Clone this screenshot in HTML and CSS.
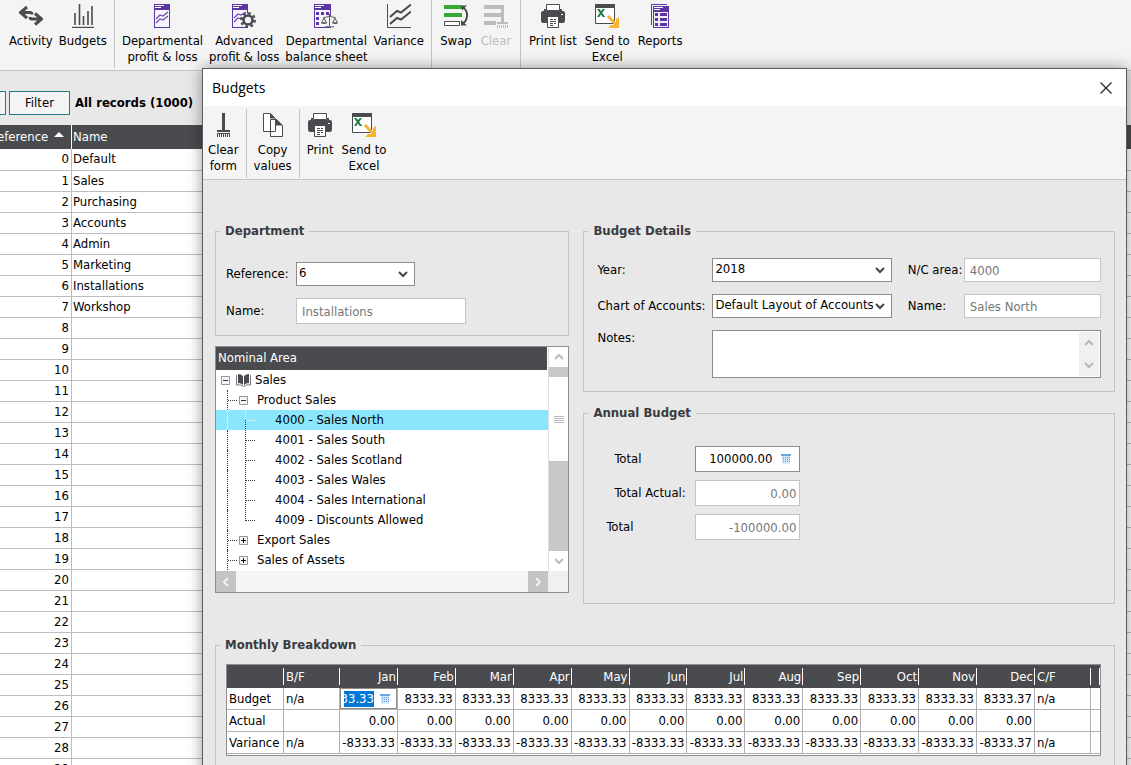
FILE: index.html
```html
<!DOCTYPE html>
<html lang="en">
<head>
  <meta charset="UTF-8" />
  <meta name="viewport" content="width=device-width, initial-scale=1.0"/>
  <title>Budgets</title>
  <link rel="stylesheet" href="styles.css">
</head>
<body>

  <!-- shared icons -->
  <svg class="sprite" aria-hidden="true">
    <symbol id="i-activity" viewBox="0 0 24 24">
      <path d="M8 3 1.500 8.500 8 14M2 8.500h9q2 0 2 2M16 9.500l6.500 5.500-6.500 5.500M22 15h-9q-2 0-2-2" fill="none" stroke="#4a4b4f" stroke-width="3"/>
    </symbol>
    <symbol id="i-budgets" viewBox="0 0 24 24">
      <path d="M4 9v12M8.500 0v21M12.500 12v9M17 7v14M21 2v19" stroke="#4a4b4f" stroke-width="1.600"/>
      <path d="M1 23.400h22" stroke="#4a4b4f" stroke-width="1.200"/>
    </symbol>
    <symbol id="i-doc" viewBox="0 0 24 24">
      <rect x="4.500" y=".5" width="15" height="23" fill="#f7f5fb" stroke="#5e35a5"/>
      <path d="M4 0h16v6H4z" fill="#5e35a5"/>
      <path d="M5 1.500h9M5 3.500h6" stroke="#fff"/>
      <path d="M6 15l4-4 3 1 5-4M6 19l4-4 3 1 5-4" fill="none" stroke="#6d4ab0" stroke-width="1.200"/>
    </symbol>
    <symbol id="i-doc-gear" viewBox="0 0 24 24">
      <rect x=".5" y=".5" width="15" height="23" fill="#f7f5fb" stroke="#5e35a5"/>
      <path d="M0 0h16v6H0z" fill="#5e35a5"/>
      <path d="M1 1.500h9M1 3.500h6" stroke="#fff"/>
      <path d="M2 14l4-4 3 1 5-3M2 18l4-4 3 1" fill="none" stroke="#6d4ab0" stroke-width="1.200"/>
      <circle cx="16" cy="16" r="6.500" fill="#f4f4f4"/>
      <circle cx="16" cy="16" r="4.500" fill="none" stroke="#4a4b4f" stroke-width="2.600"/>
      <circle cx="16" cy="16" r="6.700" fill="none" stroke="#4a4b4f" stroke-width="2.600" stroke-dasharray="2.630 2.630"/>
    </symbol>
    <symbol id="i-doc-scales" viewBox="0 0 24 24">
      <rect x=".5" y=".5" width="16" height="23" fill="#f7f5fb" stroke="#5e35a5"/>
      <path d="M0 0h17v6H0z" fill="#5e35a5"/>
      <path d="M1 1.500h9M1 3.500h6" stroke="#fff"/>
      <path d="M2 8h3v3H2zM7 8h3v3H7zM12 8h3v3h-3zM2 13h3v3H2zM2 18h3v3H2z" fill="#5e35a5"/>
      <path d="M8 12h15v8h-5v3h-6v-3H8z" fill="#f4f4f4"/>
      <path d="M15.500 10v12M11 22.800h9M9.500 13.500q3 0 6-1.500 3 1.500 6 1.500M10 14l-2.500 5h5zM21 14l-2.500 5h5z" fill="none" stroke="#5a5b60"/>
      <path d="M7 18.500h6q-3 3-6 0M18 18.500h6q-3 3-6 0" fill="#5a5b60"/>
    </symbol>
    <symbol id="i-variance" viewBox="0 0 24 24">
      <path d="M.5 0v23.500H24" fill="none" stroke="#4a4b4f"/>
      <path d="M3 13l7-6 4 1.500 10-8M3 20l7-6 4 1.500 10-8" fill="none" stroke="#4a4b4f" stroke-width="2"/>
    </symbol>
    <symbol id="i-swap" viewBox="0 0 24 24">
      <path d="M0 1h18v4H0zM0 9h18v4H0z" fill="#35a935"/>
      <path d="M.5 17.500h15v4H.5z" fill="#fff" stroke="#4a4b4f"/>
      <path d="M19 3.500q4.500 3 4 8.500t-4.500 7.500" fill="none" stroke="#4a4b4f" stroke-width="2"/>
      <path d="M17 1.500h6l-5 5zM17 21.500h6l-6-5.500z" fill="#4a4b4f"/>
    </symbol>
    <symbol id="i-clear" viewBox="0 0 24 24">
      <path d="M0 1h20v4H0zM0 9h17v4H0zM0 17h12v4H0zM17 1h3v17h-3zM13 18h11v2H13zM13 21h1v3h-1zM15 21h1v3h-1zM17 21h1v3h-1zM19 21h1v3h-1zM21 21h1v3h-1zM23 21h1v3h-1z" fill="#bcbcbc"/>
    </symbol>
    <symbol id="i-broom" viewBox="0 0 24 24">
      <path d="M11 0h3v17h-3zM6 17h13v2H6zM6 20h13v1H6zM6 20h1v4H6zM8 20h1v4H8zM10 20h1v4h-1zM12 20h1v4h-1zM14 20h1v4h-1zM16 20h1v4h-1zM18 20h1v4h-1z" fill="#4a4b4f"/>
    </symbol>
    <symbol id="i-copy" viewBox="0 0 24 24">
      <path d="M2.500.5h7l5 5v13h-12zM9.500 6.500h6l6 6v11h-12z" fill="#fff" stroke="#4a4b4f"/>
      <path d="M9 0l5 5.500H9zM15 6l7 6.500h-7z" fill="#4a4b4f"/>
    </symbol>
    <symbol id="i-print" viewBox="0 0 24 24">
      <path d="M5.500.5h13v6h-13z" fill="#fff" stroke="#4a4b4f"/>
      <path d="M0 9q0-2 2-2h20q2 0 2 2v7q0 3-2 3H2q-2 0-2-3z" fill="#4a4b4f"/>
      <path d="M3 5h2v3H3zM19 5h2v3h-2z" fill="#4a4b4f"/>
      <path d="M6.500 12.500h11v11h-11z" fill="#fff" stroke="#4a4b4f"/>
      <path d="M9 15.500h3M13 15.500h2M9 17.500h6M9 19.500h3M13 19.500h2M9 21.500h3" stroke="#4a4b4f"/>
      <path d="M20 10h2v1h-2z" fill="#fff"/>
    </symbol>
    <symbol id="i-excel" viewBox="0 0 24 24">
      <path d="M.5.5h19v19H.5z" fill="#fff" stroke="#4a4b4f"/>
      <path d="M0 0h20v4H0z" fill="#4a4b4f"/>
      <path d="M2 5h2.500L6 7.300 7.600 5H10L7.200 9l3 4H7.700L5.900 10.600 4.300 13H2l2.800-4z" fill="#1e7b45"/>
      <path d="M13 12l8.500 9" stroke="#f9b233" stroke-width="3"/>
      <path d="M24 12.500V24H13l3-3h5v-5.500z" fill="#f9b233"/>
    </symbol>
    <symbol id="i-reports" viewBox="0 0 24 24">
      <path d="M3.500 21V.5H19" fill="none" stroke="#5e35a5"/>
      <path d="M5 2h16v22H5z" fill="#5e35a5"/>
      <path d="M6 3.500h9M6 5.500h6" stroke="#fff"/>
      <path d="M6 8h14v15H6z" fill="#f1edf8"/>
      <path d="M7 9h3v3H7zM12 9h7v3h-7zM7 14h3v3H7zM12 14h7v3h-7zM7 19h3v3H7zM12 19h7v3h-7z" fill="#5e35a5"/>
    </symbol>
    <symbol id="i-down" viewBox="0 0 10 10"><path d="M1 3l4 4 4-4" fill="none" stroke="currentColor" stroke-width="2"/></symbol>
    <symbol id="i-up" viewBox="0 0 10 10"><path d="M1 7l4-4 4 4" fill="none" stroke="currentColor" stroke-width="2"/></symbol>
    <symbol id="i-left" viewBox="0 0 10 10"><path d="M7 1L3 5l4 4" fill="none" stroke="currentColor" stroke-width="2"/></symbol>
    <symbol id="i-right" viewBox="0 0 10 10"><path d="M3 1l4 4-4 4" fill="none" stroke="currentColor" stroke-width="2"/></symbol>
    <symbol id="i-calc" viewBox="0 0 10 10">
      <path d="M0 0h10v2H0z" fill="#6ba6dc"/>
      <path d="M1 2h8v8H1z" fill="#d5e9fa"/>
      <path d="M2 3.500h1M4 3.500h1M6 3.500h1M8 3.500h1M2 5.500h1M4 5.500h1M6 5.500h1M8 5.500h1M2 7.500h1M4 7.500h1M6 7.500h1M8 7.500h1" stroke="#5b9bd5"/>
    </symbol>
    <symbol id="i-minus" viewBox="0 0 9 9"><path d="M.5.5h8v8h-8z" fill="#f4f6f8" stroke="#8c9aa8"/><path d="M2 4.500h5" stroke="#333"/></symbol>
    <symbol id="i-plus" viewBox="0 0 9 9"><path d="M.5.5h8v8h-8z" fill="#f4f6f8" stroke="#8c9aa8"/><path d="M2 4.500h5M4.500 2v5" stroke="#111"/></symbol>
    <symbol id="i-book" viewBox="0 0 15 13">
      <path d="M2 0q3 0 5 2v9q-2-2-5-2zM13 0q-3 0-5 2v9q2-2 5-2z" fill="#4a4b4f"/>
      <path d="M.5 1v10q4-1 7 1.500 3-2.500 7-1.500V1" fill="none" stroke="#77787c"/>
    </symbol>
  </svg>

  <header class="toolbar main-toolbar">
    <div class="group">
      <button><svg><use href="#i-activity"/></svg>Activity</button>
      <button><svg><use href="#i-budgets"/></svg>Budgets</button>
    </div>
    <div class="group">
      <button><svg><use href="#i-doc"/></svg>Departmental<br>profit &amp; loss</button>
      <button><svg><use href="#i-doc-gear"/></svg>Advanced<br>profit &amp; loss</button>
      <button><svg><use href="#i-doc-scales"/></svg>Departmental<br>balance sheet</button>
      <button><svg><use href="#i-variance"/></svg>Variance</button>
    </div>
    <div class="group">
      <button><svg><use href="#i-swap"/></svg>Swap</button>
      <button disabled><svg><use href="#i-clear"/></svg>Clear</button>
    </div>
    <div class="group">
      <button><svg><use href="#i-print"/></svg>Print list</button>
      <button><svg><use href="#i-excel"/></svg>Send to<br>Excel</button>
      <button><svg><use href="#i-reports"/></svg>Reports</button>
    </div>
  </header>

  <main class="records">
    <div class="filter-bar">
      <button class="picker" aria-label="Search"></button>
      <button>Filter</button>
      <strong>All records (1000)</strong>
    </div>
    <table class="list">
      <thead>
        <tr><th class="ref">Reference <i class="sort"></i></th><th>Name</th></tr>
      </thead>
      <tbody>
        <tr><td>0</td><td>Default</td></tr>
        <tr><td>1</td><td>Sales</td></tr>
        <tr><td>2</td><td>Purchasing</td></tr>
        <tr><td>3</td><td>Accounts</td></tr>
        <tr><td>4</td><td>Admin</td></tr>
        <tr><td>5</td><td>Marketing</td></tr>
        <tr><td>6</td><td>Installations</td></tr>
        <tr><td>7</td><td>Workshop</td></tr>
        <tr><td>8</td><td></td></tr>
        <tr><td>9</td><td></td></tr>
        <tr><td>10</td><td></td></tr>
        <tr><td>11</td><td></td></tr>
        <tr><td>12</td><td></td></tr>
        <tr><td>13</td><td></td></tr>
        <tr><td>14</td><td></td></tr>
        <tr><td>15</td><td></td></tr>
        <tr><td>16</td><td></td></tr>
        <tr><td>17</td><td></td></tr>
        <tr><td>18</td><td></td></tr>
        <tr><td>19</td><td></td></tr>
        <tr><td>20</td><td></td></tr>
        <tr><td>21</td><td></td></tr>
        <tr><td>22</td><td></td></tr>
        <tr><td>23</td><td></td></tr>
        <tr><td>24</td><td></td></tr>
        <tr><td>25</td><td></td></tr>
        <tr><td>26</td><td></td></tr>
        <tr><td>27</td><td></td></tr>
        <tr><td>28</td><td></td></tr>
        <tr><td>29</td><td></td></tr>
      </tbody>
    </table>
  </main>

  <section class="dialog" role="dialog" aria-labelledby="dialog-title">
    <div class="title-bar">
      <h1 id="dialog-title">Budgets</h1>
      <button class="close" aria-label="Close">
        <svg viewBox="0 0 12 12"><path d="M.5.5l11 11M11.500.5l-11 11" stroke="#222" stroke-width="1.200"/></svg>
      </button>
    </div>

    <div class="toolbar dialog-toolbar">
      <div class="group">
        <button><svg><use href="#i-broom"/></svg>Clear<br>form</button>
      </div>
      <div class="group">
        <button><svg><use href="#i-copy"/></svg>Copy<br>values</button>
      </div>
      <div class="group">
        <button><svg><use href="#i-print"/></svg>Print</button>
        <button><svg><use href="#i-excel"/></svg>Send to<br>Excel</button>
      </div>
    </div>

    <div class="dialog-body">
      <div class="panels">
        <div class="column-left">
          <fieldset>
            <legend>Department</legend>
            <div class="department">
              <label for="ref">Reference:</label>
              <div class="combo short">
                <select id="ref"><option>6</option></select>
                <svg><use href="#i-down"/></svg>
              </div>
              <label for="dept-name">Name:</label>
              <input id="dept-name" class="medium" value="Installations" disabled>
            </div>
          </fieldset>

          <div class="tree-box">
            <div class="tree-main">
              <div class="tree-head">Nominal Area</div>
              <ul class="tree">
                <li><svg class="toggle"><use href="#i-minus"/></svg><svg class="book"><use href="#i-book"/></svg>Sales</li>
                <li class="level1"><svg class="toggle"><use href="#i-minus"/></svg>Product Sales</li>
                <li class="level2 selected">4000 - Sales North</li>
                <li class="level2">4001 - Sales South</li>
                <li class="level2">4002 - Sales Scotland</li>
                <li class="level2">4003 - Sales Wales</li>
                <li class="level2">4004 - Sales International</li>
                <li class="level2">4009 - Discounts Allowed</li>
                <li class="level1"><svg class="toggle"><use href="#i-plus"/></svg>Export Sales</li>
                <li class="level1"><svg class="toggle"><use href="#i-plus"/></svg>Sales of Assets</li>
              </ul>
            </div>
            <div class="vscroll">
              <span class="arrow"><svg><use href="#i-up"/></svg></span>
              <span class="thumb"><i></i><i></i><i></i><i></i></span>
              <span class="arrow"><svg><use href="#i-down"/></svg></span>
            </div>
            <div class="hscroll">
              <span><svg><use href="#i-left"/></svg></span>
              <span><svg><use href="#i-right"/></svg></span>
            </div>
            <div class="corner"></div>
          </div>
        </div>

        <div class="column-right">
          <fieldset>
            <legend>Budget Details</legend>
            <div class="details">
              <label for="year">Year:</label>
              <div class="combo">
                <select id="year"><option>2018</option></select>
                <svg><use href="#i-down"/></svg>
              </div>
              <label for="area" class="second">N/C area:</label>
              <input id="area" value="4000" disabled>

              <label for="chart">Chart of Accounts:</label>
              <div class="combo">
                <select id="chart"><option>Default Layout of Accounts</option></select>
                <svg><use href="#i-down"/></svg>
              </div>
              <label for="area-name" class="second">Name:</label>
              <input id="area-name" value="Sales North" disabled>

              <label for="notes" class="notes-label">Notes:</label>
              <div class="notes">
                <textarea id="notes"></textarea>
                <div class="notes-scroll">
                  <svg><use href="#i-up"/></svg>
                  <svg><use href="#i-down"/></svg>
                </div>
              </div>
            </div>
          </fieldset>

          <fieldset class="annual-box">
            <legend>Annual Budget</legend>
            <div class="annual">
              <label for="total" class="indent">Total</label>
              <div class="calc-field">
                <input id="total" value="100000.00">
                <svg><use href="#i-calc"/></svg>
              </div>
              <label for="actual" class="indent">Total Actual:</label>
              <input id="actual" value="0.00" disabled>
              <label for="variance">Total</label>
              <input id="variance" value="-100000.00" disabled>
            </div>
          </fieldset>
        </div>
      </div>

      <fieldset class="monthly-box">
        <legend>Monthly Breakdown</legend>
        <table class="monthly">
          <colgroup>
            <col class="c-name"><col class="c-fwd">
            <col span="12">
            <col class="c-fwd"><col class="c-end">
          </colgroup>
          <thead>
            <tr>
              <th></th><th>B/F</th>
              <th>Jan</th><th>Feb</th><th>Mar</th><th>Apr</th><th>May</th><th>Jun</th>
              <th>Jul</th><th>Aug</th><th>Sep</th><th>Oct</th><th>Nov</th><th>Dec</th>
              <th>C/F</th><th></th>
            </tr>
          </thead>
          <tbody>
            <tr>
              <td>Budget</td><td>n/a</td>
              <td class="editing">
                <div class="cell-edit">
                  <input value="8333.33" aria-label="January budget">
                  <svg><use href="#i-calc"/></svg>
                </div>
              </td>
              <td>8333.33</td><td>8333.33</td><td>8333.33</td><td>8333.33</td><td>8333.33</td>
              <td>8333.33</td><td>8333.33</td><td>8333.33</td><td>8333.33</td><td>8333.33</td><td>8333.37</td>
              <td>n/a</td><td></td>
            </tr>
            <tr>
              <td>Actual</td><td></td>
              <td>0.00</td><td>0.00</td><td>0.00</td><td>0.00</td><td>0.00</td><td>0.00</td>
              <td>0.00</td><td>0.00</td><td>0.00</td><td>0.00</td><td>0.00</td><td>0.00</td>
              <td></td><td></td>
            </tr>
            <tr>
              <td>Variance</td><td>n/a</td>
              <td>-8333.33</td><td>-8333.33</td><td>-8333.33</td><td>-8333.33</td><td>-8333.33</td><td>-8333.33</td>
              <td>-8333.33</td><td>-8333.33</td><td>-8333.33</td><td>-8333.33</td><td>-8333.33</td><td>-8333.37</td>
              <td>n/a</td><td></td>
            </tr>
          </tbody>
        </table>
      </fieldset>
    </div>
  </section>

</body>
</html>
```
FILE: styles.css
```css
:root {
  --bg: #e8e8e8;
  --panel: #f4f4f4;
  --dark: #4a4b4f;
  --line: #c4c4c4;
  --field: #8c8c8c;
  --muted: #777;
}

* {
  box-sizing: border-box;
}

body {
  margin: 0;
  height: 100vh;
  overflow: hidden;
  position: relative;
  background: var(--bg);
  color: #000;
  font-family: Tahoma, "DejaVu Sans Condensed", "Noto Sans", sans-serif;
  font-size: 13px;
  line-height: 16px;
}

button, input, select, textarea {
  font: inherit;
  color: inherit;
}

svg {
  display: block;
  flex: none;
}

.sprite {
  position: absolute;
  width: 0;
  height: 0;
}

/* toolbars */
.toolbar {
  display: flex;
  background: var(--panel);
  border-bottom: 1px solid var(--line);
}

.toolbar .group {
  display: flex;
  align-items: flex-start;
  padding: 0 3px;
  border-right: 1px solid var(--line);
}

.toolbar .group:last-child {
  border-right: none;
}

.toolbar button {
  border: none;
  background: none;
  padding: 0 4px;
  text-align: center;
  white-space: nowrap;
}

.toolbar button:disabled {
  color: #bcbcbc;
}

.toolbar svg {
  width: 24px;
  height: 24px;
  margin: 4px auto 5px;
}

.main-toolbar {
  height: 71px;
  padding: 0 0 2px 2px;
}

.main-toolbar .group {
  padding: 0 4px;
}

.main-toolbar button {
  min-width: 40px;
  padding: 0 3px;
}

.main-toolbar .group:last-child button {
  padding: 0 4px;
}

.dialog-toolbar {
  padding: 3px 0 1px 1px;
}

.dialog-toolbar .group {
  height: 69px;
}

.dialog-toolbar .group:first-child {
  padding-left: 0;
}

/* record list */
.filter-bar {
  display: flex;
  align-items: center;
  height: 54px;
  padding-top: 10px;
}

.filter-bar button {
  width: 61px;
  height: 24px;
  border: 1px solid #1f7a86;
  background: var(--panel);
}

.filter-bar .picker {
  width: 6px;
  margin-right: 3px;
  padding: 0;
  border-left: none;
}

.filter-bar strong {
  margin-left: 5px;
}

.list {
  width: calc(100% + 25px);
  margin-left: -25px;
  table-layout: fixed;
  border-collapse: collapse;
  background: #fff;
}

.list th {
  height: 24px;
  padding: 0 1px;
  background: var(--dark);
  color: #fff;
  font-weight: normal;
  text-align: left;
  white-space: nowrap;
  border-left: 1px solid #fff;
}

.list .ref {
  width: 96px;
  padding-right: 7px;
  text-align: right;
}

.sort {
  display: inline-block;
  margin-left: 2px;
  border: 5px solid transparent;
  border-top: none;
  border-bottom-color: #fff;
  vertical-align: 4px;
}

.list td {
  height: 21px;
  padding: 0 1px;
  border-bottom: 1px solid #bdbdbd;
  border-left: 1px solid #bdbdbd;
}

.list td:first-child {
  padding-right: 2px;
  text-align: right;
}

/* dialog */
.dialog {
  position: absolute;
  top: 68px;
  left: 202px;
  right: 4px;
  background: var(--bg);
  border: 1px solid #5c5c5c;
  box-shadow: 0 0 14px rgba(0, 0, 0, 0.4);
}

.title-bar {
  display: flex;
  justify-content: space-between;
  align-items: center;
  height: 37px;
  padding: 0 14px 0 9px;
  background: #fff;
}

h1 {
  margin: 0;
  font-family: "Segoe UI", "Open Sans", sans-serif;
  font-size: 14px;
  font-weight: normal;
}

.close {
  padding: 0;
  border: none;
  background: none;
}

.close svg {
  width: 12px;
  height: 12px;
}

.dialog-body {
  padding: 43px 11px 24px 12px;
}

.panels {
  display: grid;
  grid-template-columns: 2fr 3fr;
  gap: 14px;
  align-items: start;
}

fieldset {
  min-width: 0;
  margin: 0;
  padding: 0 4px;
  border: 1px solid var(--line);
}

legend {
  padding: 0 5px;
  font-weight: bold;
  color: #3a3b3f;
}

input, select, textarea {
  width: 100%;
  height: 24px;
  border: 1px solid var(--field);
  border-radius: 0;
  background: #fff;
  outline: none;
}

input:disabled {
  padding: 0 3px 0 5px;
  border-color: var(--line);
  color: var(--muted);
}

select {
  appearance: none;
  padding: 0 2px 2px;
}

.combo {
  position: relative;
}

.combo svg {
  position: absolute;
  top: 7px;
  right: 7px;
  width: 10px;
  height: 10px;
  color: #444;
  pointer-events: none;
}

.department {
  display: grid;
  grid-template-columns: 70px 1fr;
  gap: 12px 0;
  align-items: center;
  padding: 23px 6px 11px;
}

.short {
  width: 119px;
}

.department .medium {
  width: 170px;
  height: 26px;
}

/* nominal tree */
.tree-box {
  display: grid;
  grid-template-columns: 1fr 20px;
  margin-top: 10px;
  border: 1px solid #8f8f8f;
  background: #fff;
}

.tree-head {
  height: 23px;
  margin-right: 1px;
  padding: 3px 2px;
  background: var(--dark);
  color: #fff;
}

.tree {
  margin: 0;
  padding: 0 0 1px;
  list-style: none;
}

.tree li {
  position: relative;
  display: flex;
  align-items: center;
  height: 20px;
  padding-left: 5px;
}

.toggle {
  width: 9px;
  height: 9px;
  margin-right: 6px;
}

.book {
  width: 15px;
  height: 13px;
  margin-right: 4px;
}

.tree .level1 {
  padding-left: 23px;
}

.tree .level1 .toggle {
  margin-right: 9px;
}

.tree .level2 {
  padding-left: 59px;
}

/* dotted branch lines */
.level1::before, .level2::before {
  content: "";
  position: absolute;
  top: 0;
  left: 11px;
  height: 20px;
  border-left: 1px dotted #333;
}

.level1::after {
  content: "";
  position: absolute;
  top: 10px;
  left: 12px;
  width: 9px;
  border-top: 1px dotted #333;
}

.level2::after {
  content: "";
  position: absolute;
  top: -10px;
  left: 29px;
  width: 9px;
  height: 20px;
  border: 1px dotted #333;
  border-width: 0 0 1px 1px;
}

.tree .selected {
  background: #8ae6fd;
}

.selected::before, .selected::after {
  border-color: #fff;
}

.selected::after {
  top: 0;
  height: 10px;
}

.vscroll {
  display: flex;
  flex-direction: column;
  justify-content: space-between;
  background: #c8c8c8;
  border-left: 1px solid #ddd;
}

.arrow {
  display: flex;
  align-items: center;
  justify-content: center;
  height: 20px;
  background: #fff;
  color: #bbb;
}

.arrow svg, .hscroll svg {
  width: 10px;
  height: 10px;
}

.thumb {
  display: flex;
  flex-direction: column;
  align-items: center;
  justify-content: center;
  gap: 1px;
  height: 84px;
  margin-bottom: 80px;
  background: #fff;
}

.thumb i {
  width: 10px;
  height: 1px;
  background: #bbb;
}

.hscroll {
  display: flex;
  justify-content: space-between;
  height: 21px;
  background: #f5f5f5;
}

.hscroll span {
  display: flex;
  align-items: center;
  justify-content: center;
  width: 20px;
  background: #c4c4c4;
  color: #f0f0f0;
}

.corner {
  background: #f0f0f0;
}

/* budget details */
.details {
  display: grid;
  grid-template-columns: 115px 17fr 72px 13fr;
  grid-template-rows: 24px 24px 48px;
  row-gap: 12px;
  align-items: center;
  padding: 19px 9px 13px;
}

.second {
  padding-left: 16px;
  white-space: nowrap;
}

.notes-label {
  align-self: start;
}

.notes {
  display: flex;
  grid-column: span 3;
  height: 48px;
  padding: 1px;
  border: 1px solid var(--field);
  background: #fff;
}

.notes textarea {
  flex: 1;
  height: 100%;
  padding: 2px;
  border: none;
  resize: none;
}

.notes-scroll {
  display: flex;
  flex-direction: column;
  align-items: center;
  justify-content: space-around;
  width: 20px;
  background: #f0f0f0;
  color: #b8b8b8;
}

.notes-scroll svg {
  width: 10px;
  height: 10px;
}

/* annual budget */
.annual-box {
  margin-top: 13px;
}

.annual {
  display: grid;
  grid-template-columns: 89px 105px;
  row-gap: 8px;
  align-items: center;
  padding: 25px 18px 63px;
}

.annual input {
  height: 26px;
  text-align: right;
}

.annual .indent {
  padding-left: 8px;
  white-space: nowrap;
}

.calc-field {
  display: flex;
  align-items: center;
  height: 26px;
  padding-right: 8px;
  border: 1px solid var(--field);
  background: #fff;
}

.annual .calc-field input {
  height: 24px;
  min-width: 0;
  padding: 0 9px 2px 0;
  border: none;
}

.calc-field svg, .cell-edit svg {
  width: 10px;
  height: 10px;
}

/* monthly breakdown */
.monthly-box {
  margin-top: 33px;
  padding-bottom: 20px;
}

.monthly {
  width: calc(100% - 15px);
  margin: 11px 9px 0 6px;
  table-layout: fixed;
  border-collapse: separate;
  border-spacing: 0;
  border: 1px solid #8f8f8f;
  padding-bottom: 1px;
  background: #fff;
}

.c-name {
  width: 57px;
}

.c-fwd {
  width: 56px;
}

.c-end {
  width: 9px;
}

.monthly th, .monthly td {
  height: 22px;
  padding: 0 2px;
  border-right: 1px solid #b0b0b0;
  border-bottom: 1px solid #b0b0b0;
  text-align: right;
  white-space: nowrap;
}

.monthly th {
  height: 23px;
  border: none;
  background: linear-gradient(#fff, #fff) right center / 1px 17px no-repeat var(--dark);
  color: #fff;
  font-weight: normal;
}

.monthly th:nth-child(-n+2), .monthly td:nth-child(-n+2),
.monthly th:nth-child(15), .monthly td:nth-child(15) {
  text-align: left;
}

.monthly td:last-child {
  border-right: none;
}

.monthly .editing {
  padding: 0;
}

.cell-edit {
  display: flex;
  align-items: center;
  justify-content: space-between;
  height: 21px;
  padding: 0 6px 0 3px;
  border: 1px solid var(--field);
}

.cell-edit input {
  direction: rtl;
  width: 30px;
  height: 16px;
  padding: 0;
  border: none;
  background: #0078d7;
  color: #fff;
}
```
